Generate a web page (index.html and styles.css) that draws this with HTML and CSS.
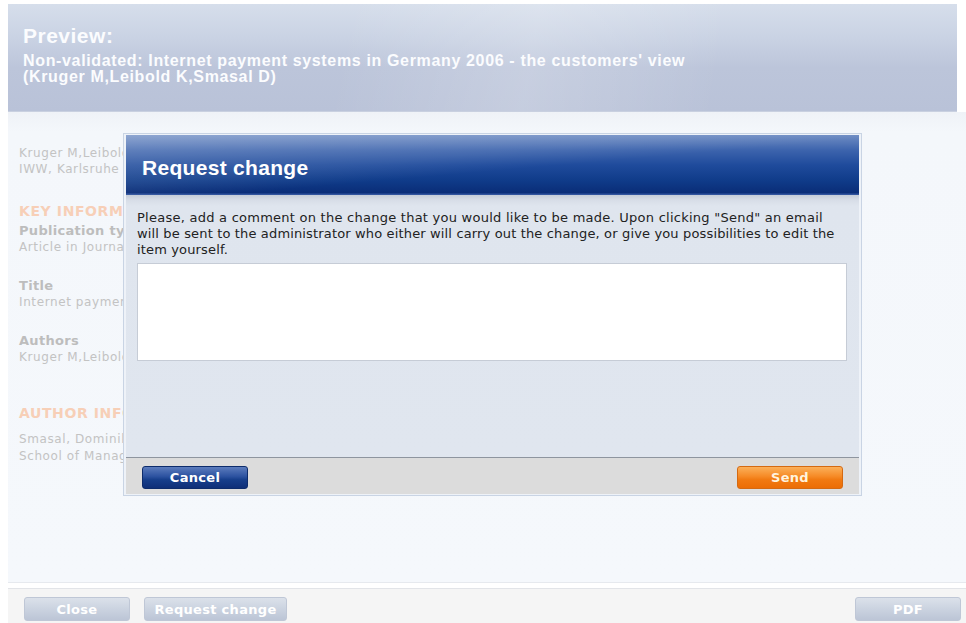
FILE: index.html
```html
<!DOCTYPE html>
<html lang="en">
<head>
<meta charset="utf-8">
<title>Preview</title>
<link rel="stylesheet" href="styles.css">
</head>
<body>
<div class="page">
  <header class="hd">
    <h1 class="hd-title">Preview:</h1>
    <p class="hd-sub">Non-validated: Internet payment systems in Germany 2006 - the customers' view<br>(Kruger M,Leibold K,Smasal D)</p>
  </header>

  <main class="content">
    <div class="lines">
      <div>Kruger M,Leibold K,Smasal D</div>
      <div>IWW, Karlsruhe</div>
    </div>

    <h2 class="sec sec-key">KEY INFORMATION</h2>
    <div class="field field-first">
      <div class="label">Publication type</div>
      <div>Article in Journal</div>
    </div>
    <div class="field">
      <div class="label">Title</div>
      <div>Internet payment</div>
    </div>
    <div class="field">
      <div class="label">Authors</div>
      <div>Kruger M,Leibold K</div>
    </div>

    <h2 class="sec sec-author">AUTHOR INFORMATION</h2>
    <div class="lines lines-author">
      <div>Smasal, Dominik</div>
      <div>School of Management</div>
    </div>
  </main>

  <footer class="bar">
    <div class="bar-left">
      <button class="pbtn pbtn-close">Close</button>
      <button class="pbtn pbtn-req">Request change</button>
    </div>
    <button class="pbtn pbtn-pdf">PDF</button>
  </footer>
</div>

<div class="dialog" role="dialog" aria-labelledby="dlg-title">
  <div class="dlg-head">
    <h2 id="dlg-title" class="dlg-title">Request change</h2>
  </div>
  <div class="dlg-body">
    <p class="dlg-text"><span class="dlg-lead">Please, add a comment on the change that you would like to be made. Upon clicking "Send" an email</span><br>will be sent to the administrator who either will carry out the change, or give you possibilities to edit the item yourself.</p>
    <textarea class="dlg-input"></textarea>
  </div>
  <div class="dlg-foot">
    <button class="dbtn dbtn-cancel">Cancel</button>
    <button class="dbtn dbtn-send">Send</button>
  </div>
</div>
</body>
</html>
```

FILE: styles.css
```css
html, body {
  margin: 0;
  padding: 0;
  background: #ffffff;
}

body {
  width: 966px;
  height: 623px;
  overflow: hidden;
  position: relative;
  font-family: "DejaVu Sans", Verdana, sans-serif;
}

/* ---------- page behind the dialog (dimmed) ---------- */
.page {
  height: 623px;
  padding: 4px 0 0 8px;
  box-sizing: border-box;
  display: flex;
  flex-direction: column;
}

.hd {
  height: 108px;
  margin-right: 9px;
  box-sizing: border-box;
  padding: 20px 0 0 15px;
  background:
    linear-gradient(100deg, rgba(255,255,255,0) 35%, rgba(255,255,255,0.18) 55%, rgba(255,255,255,0) 75%),
    linear-gradient(180deg, #d6deeb 0%, #cad3e4 30%, #bcc5da 60%, #b9c2d8 100%);
  border-bottom: 1px solid #c9d0e0;
  color: #fbfcfe;
  font-family: "Liberation Sans", Arial, sans-serif;
}

.hd-title {
  margin: 0;
  font-size: 21px;
  line-height: 24px;
  letter-spacing: 0.5px;
  font-weight: bold;
}

.hd-sub {
  margin: 5px 0 0;
  font-size: 16px;
  line-height: 16px;
  letter-spacing: 0.65px;
  font-weight: bold;
}

.content {
  flex: 1;
  background: linear-gradient(180deg, #eff2f7 0px, #f4f7fb 20px, #f5f8fc 100%);
  padding: 33px 0 0 11px;
  color: #c3c3c3;
  font-size: 12px;
  letter-spacing: 0.6px;
  line-height: 16px;
  border-bottom: 1px solid #e6e9ee;
  margin-bottom: 5px;
}

.sec {
  margin: 26px 0 0;
  font-size: 14px;
  letter-spacing: 0.6px;
  line-height: 16px;
  font-weight: bold;
  color: #f7cfb7;
}

.sec-author {
  margin-top: 40px;
}

.field {
  margin-top: 23px;
}

.field-first {
  margin-top: 4px;
}

.label {
  font-weight: bold;
  color: #bdbdbd;
  font-size: 13px;
  letter-spacing: 0.3px;
}

.lines-author {
  margin-top: 10px;
  line-height: 17px;
}

.bar {
  height: 35px;
  box-sizing: border-box;
  border-top: 1px solid #e2e4e8;
  background: #f5f5f5;
  padding: 8px 5px 0 16px;
  display: flex;
  justify-content: space-between;
  align-items: flex-start;
}

.bar-left {
  display: flex;
  gap: 14px;
}

.pbtn {
  height: 24px;
  width: 106px;
  padding: 0;
  border: 1px solid #bfc7d6;
  border-radius: 3px;
  background: linear-gradient(180deg, #dbe1ea 0%, #cbd3e0 50%, #bcc5d6 100%);
  color: #ffffff;
  font-family: "DejaVu Sans", Verdana, sans-serif;
  font-size: 13px;
  letter-spacing: 0.3px;
  font-weight: bold;
}

.pbtn-req {
  width: 143px;
}

/* ---------- dialog ---------- */
.dialog {
  position: absolute;
  left: 123px;
  top: 133px;
  width: 739px;
  box-sizing: border-box;
  padding: 1px 2px 1px 2px;
  background: #eef2f8;
  border: 1px solid #c9d4e4;
}

.dlg-head {
  height: 60px;
  box-sizing: border-box;
  padding: 21px 0 0 16px;
  background:
    linear-gradient(175deg, rgba(255,255,255,0.22) 0%, rgba(255,255,255,0.08) 40%, rgba(255,255,255,0) 55%),
    linear-gradient(180deg, #6f8dc4 0%, #3d64ad 25%, #1f4b9c 50%, #103c8a 75%, #0a2d78 96%, #3b5ea8 100%);
}

.dlg-title {
  margin: 0;
  color: #ffffff;
  font-family: "Liberation Sans", Arial, sans-serif;
  font-size: 21px;
  letter-spacing: 0.3px;
  line-height: 24px;
  font-weight: bold;
}

.dlg-body {
  height: 262px;
  box-sizing: border-box;
  padding: 15px 12px 0 11px;
  background: linear-gradient(180deg, #c5ccd8 0px, #d7dde7 5px, #dfe5ee 11px, #e0e6ef 100%);
}

.dlg-text {
  margin: 0;
  color: #222222;
  font-size: 13px;
  line-height: 16px;
  letter-spacing: 0.15px;
}

/* first sentence runs a touch wider */
.dlg-lead {
  letter-spacing: 0.25px;
}

.dlg-input {
  display: block;
  margin-top: 5px;
  width: 100%;
  height: 98px;
  box-sizing: border-box;
  border: 1px solid #c6ccd6;
  background: #ffffff;
  resize: none;
  padding: 2px;
}

.dlg-foot {
  height: 37px;
  box-sizing: border-box;
  border-top: 1px solid #8e959f;
  background: #dcdcdc;
  padding: 8px 16px 0 16px;
  display: flex;
  justify-content: space-between;
  align-items: flex-start;
}

.dbtn {
  width: 106px;
  height: 23px;
  padding: 0;
  border-radius: 3px;
  font-family: "DejaVu Sans", Verdana, sans-serif;
  font-size: 13px;
  letter-spacing: 0.3px;
  font-weight: bold;
}

.dbtn-cancel {
  border: 1px solid #0d2c6c;
  background: linear-gradient(180deg, #5c7cbd 0%, #2c52a0 45%, #173f8c 60%, #0f2f78 100%);
  color: #ffffff;
}

.dbtn-send {
  border: 1px solid #d56a12;
  background: linear-gradient(180deg, #fbb05a 0%, #f68a26 45%, #f17a12 60%, #ec6d05 100%);
  color: #fff3de;
}
```
